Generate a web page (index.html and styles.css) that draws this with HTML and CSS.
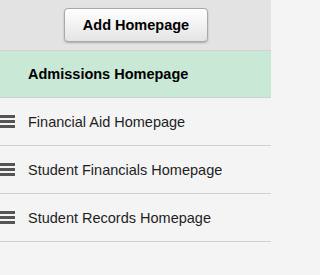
FILE: index.html
```html
<!DOCTYPE html>
<html>
<head>
<meta charset="utf-8">
<link rel="stylesheet" href="styles.css">
</head>
<body>
<div class="page">
  <div class="header">
    <button class="add-btn">Add Homepage</button>
  </div>
  <ul class="list">
    <li class="row selected"><span class="label">Admissions Homepage</span></li>
    <li class="row"><span class="grip"><i></i><i></i><i></i></span><span class="label">Financial Aid Homepage</span></li>
    <li class="row"><span class="grip"><i></i><i></i><i></i></span><span class="label">Student Financials Homepage</span></li>
    <li class="row"><span class="grip"><i></i><i></i><i></i></span><span class="label">Student Records Homepage</span></li>
  </ul>
</div>
</body>
</html>
```

FILE: styles.css
```css
html, body {
  margin: 0;
  padding: 0;
  background: #f4f4f4;
  font-family: "Liberation Sans", Arial, sans-serif;
}
.page {
  width: 271px;
  min-height: 275px;
  background: #f4f4f4;
}
.header {
  height: 51px;
  box-sizing: border-box;
  padding-top: 8px;
  background: #e3e3e3;
  border-bottom: 1px solid #d2d2d2;
  display: flex;
  justify-content: center;
  padding-left: 1px;
}
.add-btn {
  width: 144px;
  height: 34px;
  box-sizing: border-box;
  border: 1px solid #a9a9a9;
  border-radius: 4px;
  background: linear-gradient(#ffffff, #e4e4e4);
  box-shadow: 0 1px 2px rgba(0,0,0,0.25);
  font-family: "Liberation Sans", Arial, sans-serif;
  font-weight: bold;
  font-size: 14.5px;
  color: #000;
  padding: 0;
}
.list {
  list-style: none;
  margin: 0;
  padding: 0;
}
.row {
  height: 48px;
  box-sizing: border-box;
  border-bottom: 1px solid #cfcfcf;
  display: flex;
  align-items: center;
  position: relative;
  font-size: 14.5px;
  color: #1e1e1e;
}
.row.selected {
  height: 47px;
  background: #c9e9d6;
  font-weight: bold;
  color: #000;
}
.label {
  margin-left: 28px;
}
.grip {
  position: absolute;
  left: 0;
  top: 50%;
  margin-top: -7px;
  width: 15px;
  height: 13px;
  display: flex;
  flex-direction: column;
  justify-content: space-between;
}
.grip i {
  display: block;
  height: 3px;
  background: #555555;
}
```
